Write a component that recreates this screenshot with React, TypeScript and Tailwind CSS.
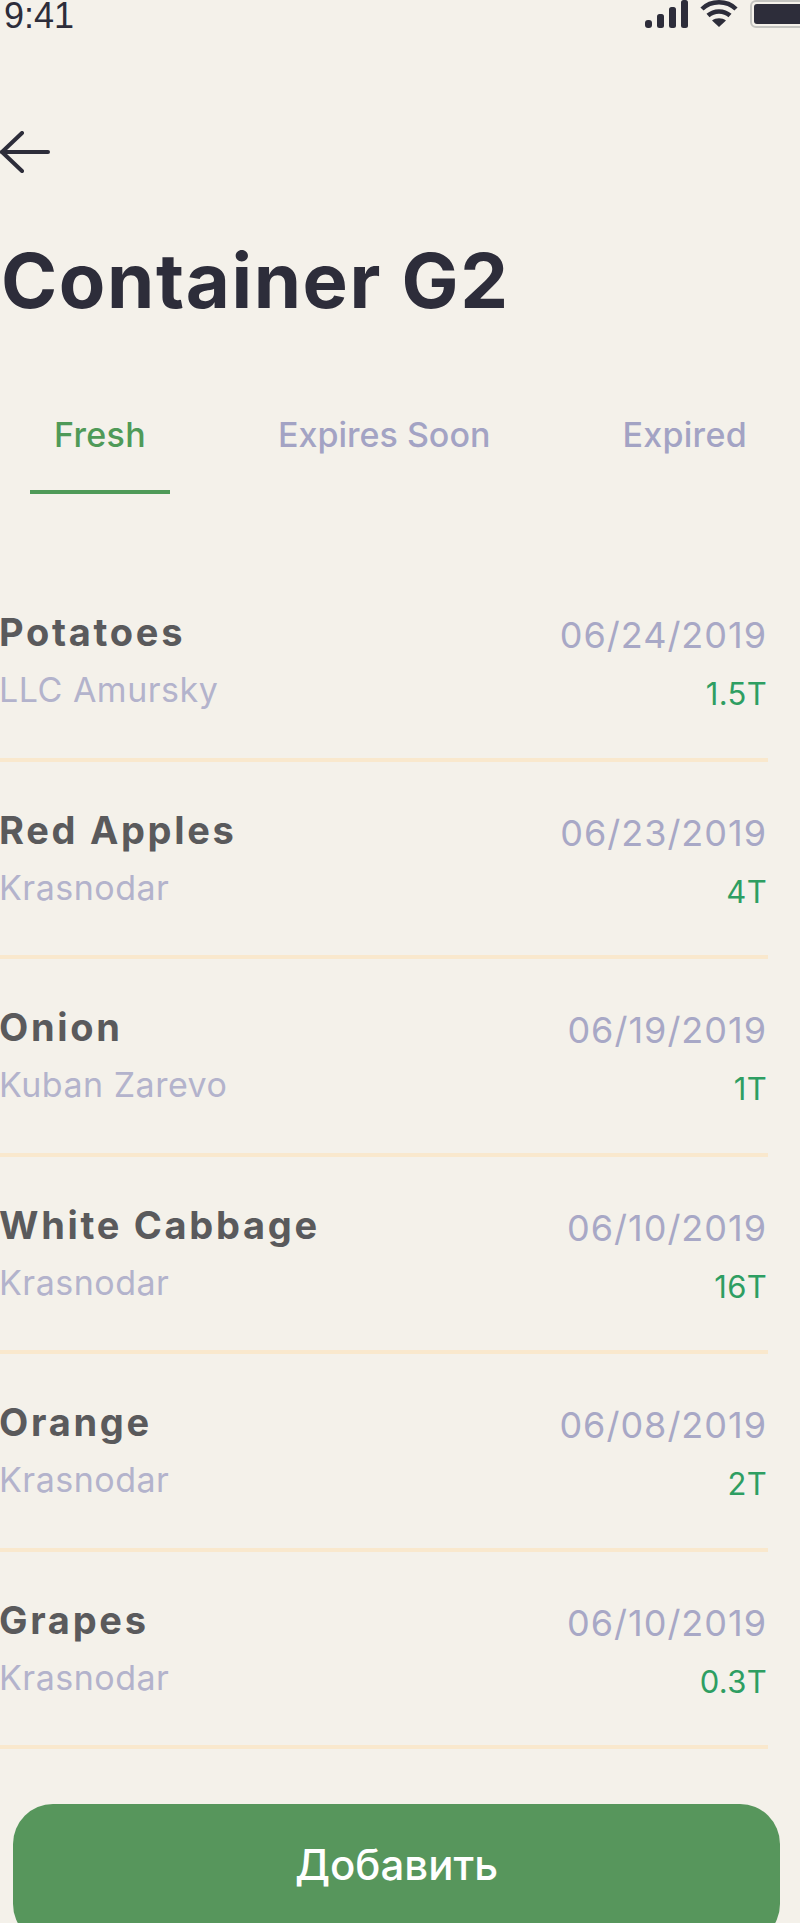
const items = [
  { name: "Potatoes", origin: "LLC Amursky", date: "06/24/2019", weight: "1.5T" },
  { name: "Red Apples", origin: "Krasnodar", date: "06/23/2019", weight: "4T" },
  { name: "Onion", origin: "Kuban Zarevo", date: "06/19/2019", weight: "1T" },
  { name: "White Cabbage", origin: "Krasnodar", date: "06/10/2019", weight: "16T" },
  { name: "Orange", origin: "Krasnodar", date: "06/08/2019", weight: "2T" },
  { name: "Grapes", origin: "Krasnodar", date: "06/10/2019", weight: "0.3T" },
];

function StatusIcons() {
  return (
    <div className="flex items-center gap-[12px] -mr-[10px]">
      <svg width="43" height="28" viewBox="0 0 43 28" fill="#2d2d3a">
        <rect x="0" y="20" width="7" height="8" rx="3" />
        <rect x="12" y="14" width="7" height="14" rx="2.5" />
        <rect x="24" y="7" width="7" height="21" rx="2.5" />
        <rect x="36" y="0" width="7" height="28" rx="2.5" />
      </svg>
      <svg width="38" height="28" viewBox="0 0 38 28" fill="none" stroke="#2d2d3a" strokeWidth="4.5">
        <path d="M2 9C11 0 27 0 36 9" />
        <path d="M8 15.5C14 10 24 10 30 15.5" />
        <path d="M19 27l-7-6.500c4-3 10-3 14 0z" fill="#2d2d3a" stroke="none" />
      </svg>
      <div className="w-[60px] h-[28px] rounded-[6px] border-2 border-[#c4c4c0] p-[2px] shrink-0">
        <div className="w-full h-full rounded-[3px] bg-[#2d2d3a]" />
      </div>
    </div>
  );
}

function ItemRow({ name, origin, date, weight }: (typeof items)[number]) {
  return (
    <div className="h-[197.5px] border-b-4 border-[#f9e8cd] mr-[32px] flex justify-between pt-[48px]">
      <div className="-ml-[1px]">
        <div className="text-[38px] leading-[40px] font-bold text-[#5a5a5c] tracking-[2.7px]">{name}</div>
        <div className="text-[34px] leading-[40px] text-[#b3b3cc] mt-[18px] tracking-[0.5px]">{origin}</div>
      </div>
      <div className="text-right mr-[1px]">
        <div className="text-[36px] leading-[40px] text-[#a8a8c6] mt-[3px] tracking-[1px]">{date}</div>
        <div className="text-[31px] leading-[36px] text-[#2e9e62] mt-[21px] tracking-[0.3px]">{weight}</div>
      </div>
    </div>
  );
}

export default function App() {
  return (
    <div className="w-[800px] h-[1923px] bg-[#f4f1ea] overflow-hidden flex flex-col font-['Inter',sans-serif]">
      <div className="flex justify-between items-start h-[32px] pl-[4px]">
        <span className="text-[36px] leading-[32px] text-[#2d2d3a] font-['Liberation_Sans',sans-serif]">9:41</span>
        <StatusIcons />
      </div>

      <svg width="50" height="42" viewBox="0 0 50 42" fill="none" stroke="#2d2d3a" strokeWidth="4" strokeLinecap="round" strokeLinejoin="round" className="mt-[99px] shrink-0">
        <path d="M48 21H2" />
        <path d="M22 2L2 21L22 40" />
      </svg>

      <h1 className="text-[76px] leading-[84px] font-bold text-[#2d2d3a] mt-[65px] ml-[1px] tracking-[1.6px]">Container G2</h1>

      <div className="flex h-[84px] mt-[88px] text-[34px] leading-[40px] font-medium text-[#a3a3c4]">
        <div className="w-[140px] ml-[30px] h-[84px] border-b-4 border-[#4f9a58] text-center text-[#4f9a58] pt-[5px] tracking-[0.3px]">
          Fresh
        </div>
        <span className="ml-[108px] pt-[5px]">Expires Soon</span>
        <span className="ml-auto mr-[53px] pt-[5px] tracking-[0.3px]">Expired</span>
      </div>

      <div className="mt-[70px]">
        {items.map((item) => (
          <ItemRow key={item.name} {...item} />
        ))}
      </div>

      <button className="mt-[55px] ml-[13px] w-[767px] h-[140px] shrink-0 rounded-[40px] bg-[#57965c] text-white text-[42px] font-medium pb-[20px]">
        Добавить
      </button>
    </div>
  );
}
